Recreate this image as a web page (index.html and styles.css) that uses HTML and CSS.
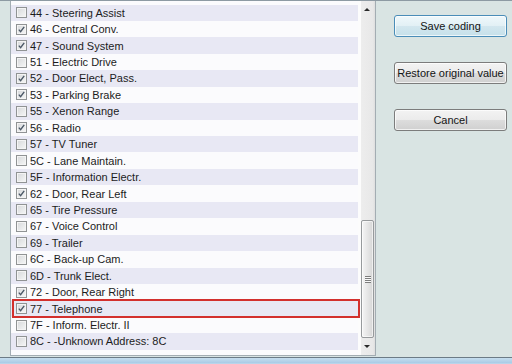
FILE: index.html
```html
<!DOCTYPE html>
<html lang="en">

<head>
    <meta charset="UTF-8">
    <title>Long Coding</title>
    <link rel="stylesheet" href="styles.css">
</head>

<body>
    <div class="window">
        <div class="listbox">
            <ul class="rows">
                <li class="row"><span class="box"></span>44 - Steering Assist</li>
                <li class="row"><span class="box"><svg viewBox="0 0 9 9"><path d="M1.8 4.6 L3.6 6.6 L7.2 1.8"/></svg></span>46 - Central Conv.</li>
                <li class="row"><span class="box"><svg viewBox="0 0 9 9"><path d="M1.8 4.6 L3.6 6.6 L7.2 1.8"/></svg></span>47 - Sound System</li>
                <li class="row"><span class="box"></span>51 - Electric Drive</li>
                <li class="row"><span class="box"><svg viewBox="0 0 9 9"><path d="M1.8 4.6 L3.6 6.6 L7.2 1.8"/></svg></span>52 - Door Elect, Pass.</li>
                <li class="row"><span class="box"><svg viewBox="0 0 9 9"><path d="M1.8 4.6 L3.6 6.6 L7.2 1.8"/></svg></span>53 - Parking Brake</li>
                <li class="row"><span class="box"></span>55 - Xenon Range</li>
                <li class="row"><span class="box"><svg viewBox="0 0 9 9"><path d="M1.8 4.6 L3.6 6.6 L7.2 1.8"/></svg></span>56 - Radio</li>
                <li class="row"><span class="box"></span>57 - TV Tuner</li>
                <li class="row"><span class="box"></span>5C - Lane Maintain.</li>
                <li class="row"><span class="box"></span>5F - Information Electr.</li>
                <li class="row"><span class="box"><svg viewBox="0 0 9 9"><path d="M1.8 4.6 L3.6 6.6 L7.2 1.8"/></svg></span>62 - Door, Rear Left</li>
                <li class="row"><span class="box"></span>65 - Tire Pressure</li>
                <li class="row"><span class="box"></span>67 - Voice Control</li>
                <li class="row"><span class="box"></span>69 - Trailer</li>
                <li class="row"><span class="box"></span>6C - Back-up Cam.</li>
                <li class="row"><span class="box"></span>6D - Trunk Elect.</li>
                <li class="row"><span class="box"><svg viewBox="0 0 9 9"><path d="M1.8 4.6 L3.6 6.6 L7.2 1.8"/></svg></span>72 - Door, Rear Right</li>
                <li class="row marked"><span class="box"><svg viewBox="0 0 9 9"><path d="M1.8 4.6 L3.6 6.6 L7.2 1.8"/></svg></span>77 - Telephone</li>
                <li class="row"><span class="box"></span>7F - Inform. Electr. II</li>
                <li class="row"><span class="box"></span>8C - -Unknown Address: 8C</li>
            </ul>
            <div class="scrollbar">
                <span class="arrow up"></span>
                <span class="thumb"><span class="grip"></span></span>
                <span class="arrow down"></span>
            </div>
        </div>

        <div class="actions">
            <button class="btn default">Save coding</button>
            <button class="btn">Restore original value</button>
            <button class="btn">Cancel</button>
        </div>
    </div>
    <div class="taskbar"></div>
</body>

</html>
```

FILE: styles.css
```css
* {
    box-sizing: border-box;
    margin: 0;
    padding: 0;
}

body {
    font-family: "Liberation Sans", Arial, sans-serif;
    font-size: 11px;
    color: #1c1c1c;
    background-color: #b9d4ea;
    overflow: hidden;
}

.window {
    height: 358px;
    display: flex;
    padding-left: 10px;
    background-color: #d9e4e3;
    border-top: 1px solid #8d9aa3;
    border-bottom: 1px solid #6c7b86;
}

/* the checkbox list */
.listbox {
    width: 366px;
    height: 355px;
    display: flex;
    background-color: #fbfbfd;
    border: 1px solid #a3adb3;
    border-top: none;
}

.rows {
    width: 347px;
    list-style: none;
    padding-top: 3.5px;
}

.row {
    height: 16.45px;
    display: flex;
    align-items: center;
    padding-left: 5px;
    position: relative;
}

.row:nth-child(odd) {
    background-color: #e8e8f4;
}

.row.marked::after { /* red highlight drawn over the row */
    content: '';
    position: absolute;
    left: 1px;
    right: -2px;
    top: -1px;
    bottom: -1px;
    border: 2px solid #d3302d;
    z-index: 1;
}

.box {
    width: 11px;
    height: 11px;
    margin-right: 3px;
    border: 1px solid #909394;
    background: linear-gradient(135deg, #d6d8da, #f6f7f7);
    box-shadow: inset 0 0 0 1px #f4f4f4;
    display: flex;
    align-items: center;
    justify-content: center;
}

.box svg {
    width: 9px;
    height: 9px;
}

.box path {
    fill: none;
    stroke: #4b5866;
    stroke-width: 1.4;
}

/* scrollbar */
.scrollbar {
    width: 17px;
    display: flex;
    flex-direction: column;
    align-items: flex-end;
    background: linear-gradient(to right, #fcfcfc 0 3px, #ededed 3px, #e8e8e8 15px, #dedede);
}

.arrow {
    width: 14px;
    height: 17px;
    display: flex;
    align-items: center;
    justify-content: center;
    margin-right: 1px;
}

.arrow::before {
    content: '';
    border-left: 3px solid transparent;
    border-right: 3px solid transparent;
}

.arrow.up::before {
    border-bottom: 3px solid #2a2a2a;
}

.arrow.down::before {
    border-top: 3px solid #2a2a2a;
}

.thumb {
    width: 13px;
    height: 118px;
    margin-top: auto;
    margin-right: 1px;
    border: 1px solid #979a9c;
    border-radius: 2px;
    background: linear-gradient(to right, #f5f5f5, #e6e6e6 50%, #d6d6d6);
    box-shadow: inset 0 0 0 1px rgba(255, 255, 255, 0.6);
    display: flex;
    align-items: center;
    justify-content: center;
}

.grip {
    width: 6px;
    height: 7px;
    background: repeating-linear-gradient(#7d7d7d 0 1px, #f8f8f8 1px 2px);
}

/* buttons on the right */
.actions {
    display: flex;
    flex-direction: column;
    gap: 25px;
    padding-top: 14px;
    margin-left: 18px;
}

.btn {
    width: 113px;
    height: 22px;
    font-family: "Liberation Sans", Arial, sans-serif;
    font-size: 11px;
    color: #141414;
    border: 1px solid #7c7c7c;
    border-radius: 3px;
    background: linear-gradient(#f3f3f3, #ebebeb 50%, #dddddd 50%, #d0d0d0);
    box-shadow: inset 0 0 0 1px rgba(255, 255, 255, 0.7);
}

.btn.default {
    border-color: #4a8db8;
    background: linear-gradient(#eff8fb, #e2f0f5 50%, #d3e7ef 50%, #c6e0ea);
}

.taskbar {
    height: 5px;
    background: linear-gradient(#c6ddee, #a9cbe6);
}
```
